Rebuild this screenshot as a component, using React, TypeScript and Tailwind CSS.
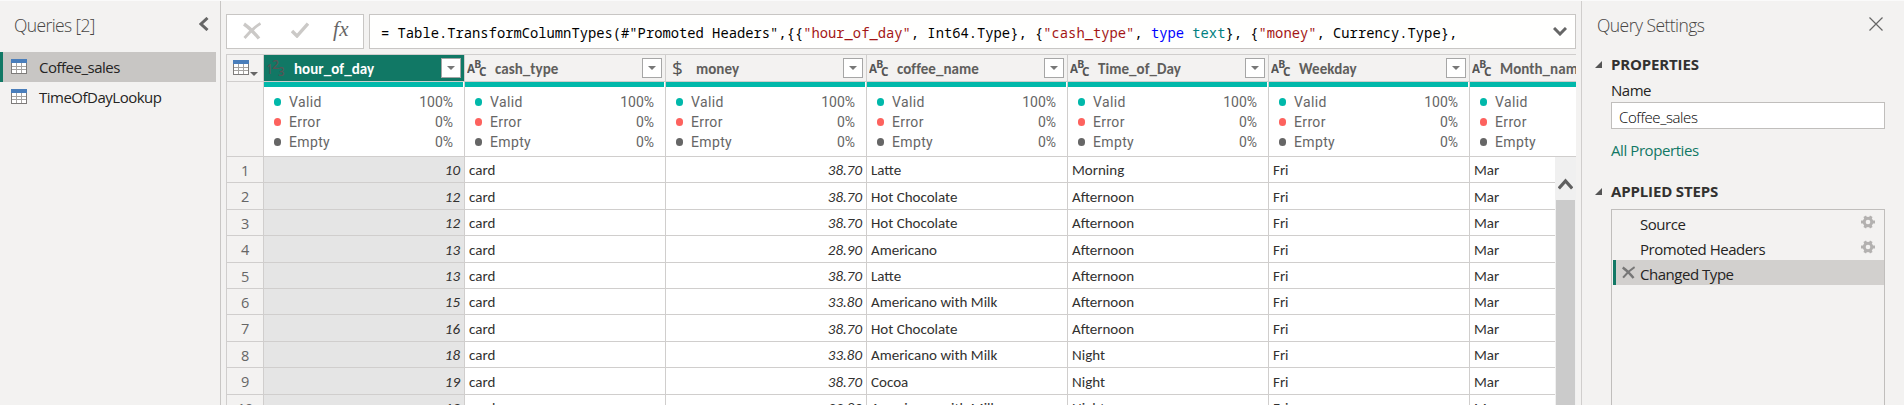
import type { ReactNode } from "react";

const UI = "font-['Open_Sans','Noto_Sans',sans-serif]";
const GRID = "font-['Carlito','Open_Sans',sans-serif]";

type Kind = "int" | "text" | "money";

const columns: { name: string; kind: Kind; selected?: boolean }[] = [
  { name: "hour_of_day", kind: "int", selected: true },
  { name: "cash_type", kind: "text" },
  { name: "money", kind: "money" },
  { name: "coffee_name", kind: "text" },
  { name: "Time_of_Day", kind: "text" },
  { name: "Weekday", kind: "text" },
  { name: "Month_name", kind: "text" },
];

const rows: string[][] = [
  ["10", "card", "38.70", "Latte", "Morning", "Fri", "Mar"],
  ["12", "card", "38.70", "Hot Chocolate", "Afternoon", "Fri", "Mar"],
  ["12", "card", "38.70", "Hot Chocolate", "Afternoon", "Fri", "Mar"],
  ["13", "card", "28.90", "Americano", "Afternoon", "Fri", "Mar"],
  ["13", "card", "38.70", "Latte", "Afternoon", "Fri", "Mar"],
  ["15", "card", "33.80", "Americano with Milk", "Afternoon", "Fri", "Mar"],
  ["16", "card", "38.70", "Hot Chocolate", "Afternoon", "Fri", "Mar"],
  ["18", "card", "33.80", "Americano with Milk", "Night", "Fri", "Mar"],
  ["19", "card", "38.70", "Cocoa", "Night", "Fri", "Mar"],
  ["19", "card", "33.80", "Americano with Milk", "Night", "Fri", "Mar"],
];

const rowHeights = [
  "h-[26px]", "h-[27px]", "h-[26px]", "h-[27px]", "h-[26px]",
  "h-[26px]", "h-[27px]", "h-[26px]", "h-[27px]", "h-[26px]",
];

const stats = [
  { label: "Valid", value: "100%", dot: "bg-[#01b8aa]" },
  { label: "Error", value: "0%", dot: "bg-[#fd625e]" },
  { label: "Empty", value: "0%", dot: "bg-[#666666]" },
];

function TableIcon() {
  return (
    <svg width="16" height="16" viewBox="0 0 16 16" shapeRendering="crispEdges" className="shrink-0">
      <rect x="0" y="0" width="16" height="15" fill="#7d7b7a" />
      <rect x="1" y="4" width="14" height="10" fill="#fff" />
      <path d="M1 7.5H15M1 10.5H15M5.5 4V14M10.5 4V14" stroke="#a5a3a1" />
      <rect x="0" y="0" width="16" height="4" fill="#4a7ebb" />
    </svg>
  );
}

function Gear() {
  return (
    <svg width="14" height="14" viewBox="0 0 14 14" className="-mt-px shrink-0">
      <path d="M0 7H14M3.7 1.2L10.3 12.8M10.3 1.2L3.7 12.8" stroke="#b3b1b0" strokeWidth="3" />
      <circle cx="7" cy="7" r="5.2" fill="#b3b1b0" />
      <circle cx="7" cy="7" r="2.3" fill="#f3f2f1" />
    </svg>
  );
}

function Cross({ size, color, wide }: { size: number; color: string; wide: number }) {
  return (
    <svg width={size} height={size} viewBox="0 0 18 17" className="shrink-0">
      <path d="M1 1.5C6 5 11 10 16 16" fill="none" stroke={color} strokeWidth={wide} />
      <path d="M17.5 1C11 5 6 10 1.5 15.5" fill="none" stroke={color} strokeWidth={wide - 0.6} />
    </svg>
  );
}

function TypeIcon({ kind }: { kind: Kind }) {
  if (kind === "money") {
    return (
      <span className="flex w-[30px] shrink-0 items-center pl-[6px] font-['Open_Sans',sans-serif] text-[19px] font-medium leading-none text-[#555]">
        $
      </span>
    );
  }
  if (kind === "int") {
    return (
      <span className="flex w-[30px] shrink-0 pl-[2px]">
        <svg width="20" height="18" viewBox="0 0 20 18" fill="#555" fontFamily="Open Sans, sans-serif" fontWeight="600">
          <text x="0.5" y="15" fontSize="13.5" textLength="6" lengthAdjust="spacingAndGlyphs">1</text>
          <text x="6" y="9.5" fontSize="12" textLength="7" lengthAdjust="spacingAndGlyphs">2</text>
          <text x="12" y="17" fontSize="13" textLength="6.5" lengthAdjust="spacingAndGlyphs">3</text>
        </svg>
      </span>
    );
  }
  return (
    <span className="flex w-[30px] shrink-0 pl-[2px]">
      <svg width="20" height="18" viewBox="0 0 20 18" fill="#555" fontFamily="Open Sans, sans-serif" fontWeight="700">
        <text x="0" y="13.7" fontSize="11.5" textLength="8" lengthAdjust="spacingAndGlyphs">A</text>
        <text x="7.2" y="9" fontSize="11" textLength="7" lengthAdjust="spacingAndGlyphs">B</text>
        <text x="12" y="17.2" fontSize="11.5" textLength="7.5" lengthAdjust="spacingAndGlyphs">C</text>
      </svg>
    </span>
  );
}

function QueryItem({ name, selected }: { name: string; selected?: boolean }) {
  return (
    <div className={`mr-[4px] flex h-[30px] items-center border-l-[3px] pl-[8px] ${selected ? "border-[#117865] bg-[#c8c6c4]" : "border-transparent"}`}>
      <TableIcon />
      <span className={`ml-[12px] text-[15px] tracking-[-0.5px] text-[#252423] ${selected ? "pt-px" : ""}`}>{name}</span>
    </div>
  );
}

function ColumnHead({ name, kind, selected }: { name: string; kind: Kind; selected?: boolean }) {
  return (
    <div className="w-[201px] shrink-0 border-r border-[#d0cecd]">
      <div className={`flex h-[26px] items-center pr-[3px] ${selected ? "bg-[#117865] text-white" : "text-[#605e5c]"}`}>
        <TypeIcon kind={kind} />
        <span className={`${GRID} grow pt-px text-[15px] font-bold leading-[20px] tracking-[0.05px]`}>{name}</span>
        <span className="flex h-[20px] w-[20px] shrink-0 items-center justify-center border border-[#a6a6a6] bg-white">
          <svg width="8" height="4" viewBox="0 0 8 4"><path d="M0 0H8L4 4Z" fill="#777" /></svg>
        </span>
      </div>
      <div className="h-px bg-[#d0cecd]" />
      <div className="bg-white">
        <div className="mr-px h-[5px] bg-[#01b8aa]" />
        <div className="flex h-[69px] flex-col pt-[5px] pl-[10px] pr-[11px]">
          {stats.map((s) => (
            <div key={s.label} className="flex h-[20px] items-center font-['Roboto',sans-serif] text-[14px] text-[#666]">
              <span className={`mr-[8px] h-[8px] w-[7px] rounded-full ${s.dot}`} />
              <span className="grow tracking-[0.35px]">{s.label}</span>
              <span>{s.value}</span>
            </div>
          ))}
        </div>
      </div>
    </div>
  );
}

function SectionTitle({ children }: { children: ReactNode }) {
  return (
    <div className="flex h-[22px] shrink-0 items-center">
      <svg width="7" height="7" viewBox="0 0 7 7" className="mr-[9px]"><path d="M7 0V7H0Z" fill="#555" /></svg>
      <span className="text-[15px] font-bold leading-[20px] tracking-[-0.15px] text-[#323130]">{children}</span>
    </div>
  );
}

function Step({ name, gear, selected }: { name: string; gear?: boolean; selected?: boolean }) {
  return (
    <div className={`flex h-[25px] items-center border-l-[3px] pr-[9px] ${selected ? "border-[#117865] bg-[#d2d0ce]" : "border-transparent"}`}>
      <span className="flex w-[24px] pl-[6px]">{selected && <Cross size={13} color="#777" wide={3.4} />}</span>
      <span className="grow pt-[2px] text-[15px] leading-[20px] tracking-[-0.47px] text-[#252423]">{name}</span>
      {gear && <Gear />}
    </div>
  );
}

export default function App() {
  return (
    <div className={`${UI} flex h-[405px] w-[1904px] overflow-hidden border-t border-[#fafafa] bg-[#f3f2f1]`}>
      <aside className="flex w-[221px] shrink-0 flex-col border-r border-[#c8c6c4]">
        <div className="flex h-[51px] items-start justify-between pt-[11px] pl-[14px] pr-[11px]">
          <span className="text-[17.5px] font-light leading-[26px] tracking-[-0.62px] text-[#484644]">Queries [2]</span>
          <svg width="10" height="14" viewBox="0 0 10 14" className="mt-[5px]"><path d="M8.5 1L2 7L8.5 13" fill="none" stroke="#666" strokeWidth="3" /></svg>
        </div>
        <QueryItem name="Coffee_sales" selected />
        <QueryItem name="TimeOfDayLookup" />
      </aside>

      <main className="flex w-[1360px] shrink-0 flex-col pt-[13px] pl-[5px] pr-[5px]">
        <div className="flex h-[35px] shrink-0 gap-[5px]">
          <div className="flex w-[138px] shrink-0 items-start border border-[#c8c6c4] bg-white pt-[7px] pl-[16px]">
            <Cross size={18} color="#cbc9c7" wide={3.4} />
            <svg width="18" height="16" viewBox="0 0 18 16" className="ml-[30px]"><path d="M1 9L6 14L17 1.5" fill="none" stroke="#cbc9c7" strokeWidth="3.4" /></svg>
            <span className="ml-[24px] -mt-[5px] font-['Liberation_Serif',serif] text-[21px] italic leading-[24px] tracking-[0.5px] text-[#666]">fx</span>
          </div>
          <div className="flex w-[1207px] items-center justify-between border border-[#c8c6c4] bg-[#fffffe] pl-[11px] pr-[8px]">
            <code className="whitespace-pre pt-[3px] font-['Noto_Sans_Mono','DejaVu_Sans_Mono',monospace] text-[13.8px] text-black">
              {'= Table.TransformColumnTypes(#"Promoted Headers",{{'}
              <span className="text-[#a31515]">"hour_of_day"</span>
              {", Int64.Type}, {"}
              <span className="text-[#a31515]">"cash_type"</span>
              {", "}
              <span className="text-[#0000ff]">type</span> <span className="text-[#008080]">text</span>
              {"}, {"}
              <span className="text-[#a31515]">"money"</span>
              {", Currency.Type},"}
            </code>
            <svg width="14" height="9" viewBox="0 0 14 9"><path d="M1 1L7 7L13 1" fill="none" stroke="#666" strokeWidth="3" /></svg>
          </div>
        </div>

        <div className="mt-[5px] flex grow flex-col overflow-hidden border-t border-l border-[#d0cecd]">
          <div className="flex shrink-0 overflow-hidden border-b border-[#d0cecd]">
            <div className="w-[37px] shrink-0 border-r border-[#d0cecd]">
              <div className="flex h-[27px] items-start border-b border-[#d0cecd] pt-[5px] pl-[6px]">
                <TableIcon />
                <svg width="8" height="5" viewBox="0 0 8 5" className="mt-[12px] ml-px"><path d="M0 0H8L4 4Z" fill="#666" /></svg>
              </div>
            </div>
            {columns.map((c) => <ColumnHead key={c.name} {...c} />)}
          </div>

          <div className="flex h-[250px] overflow-hidden">
            <div className="w-[1328px] shrink-0 overflow-hidden bg-white">
              {rows.map((r, i) => (
                <div key={i} className={`flex w-[1444px] border-b border-[#d0cecd] ${rowHeights[i]}`}>
                  <div className="flex w-[37px] shrink-0 items-center justify-center border-r border-[#d0cecd] bg-[#f3f2f1] pt-[2px] text-[14.5px] tracking-[-0.5px] text-[#666]">{i + 1}</div>
                  {r.map((v, j) => (
                    <div
                      key={j}
                      className={`${GRID} flex w-[201px] shrink-0 items-center border-r border-[#d0cecd] px-[4px] pt-[2px] text-[15px] text-[#323130] ${columns[j].kind === "text" ? "" : "justify-end italic"} ${columns[j].selected ? "bg-[#e5e5e5]" : ""}`}
                    >
                      {v}
                    </div>
                  ))}
                </div>
              ))}
            </div>
            <div className="flex w-[21px] shrink-0 flex-col items-center bg-[#f0f0f0]">
              <svg width="15" height="12" viewBox="0 0 15 12" className="mt-[21px] mb-[10px] shrink-0"><path d="M.8 10.5L7.5 3L14.2 10.5" fill="none" stroke="#606060" strokeWidth="3.2" /></svg>
              <div className="w-[19px] grow bg-[#cbcbcb]" />
            </div>
          </div>
        </div>
      </main>

      <aside className="flex grow flex-col border-l border-[#d0cecd] pl-[13px]">
        <div className="flex h-[52px] shrink-0 items-start justify-between pt-[11px] pl-[2px] pr-[21px]">
          <span className="text-[17.5px] font-light leading-[26px] tracking-[-0.55px] text-[#484644]">Query Settings</span>
          <svg width="14" height="14" viewBox="0 0 14 14" className="mt-[5px]"><path d="M.5 .5L13.5 13.5M13.5 .5L.5 13.5" stroke="#666" strokeWidth="1.2" /></svg>
        </div>
        <SectionTitle>PROPERTIES</SectionTitle>
        <div className="mr-[19px] flex shrink-0 flex-col pl-[16px]">
          <span className="mt-[4px] mb-px text-[15px] leading-[22px] tracking-[-0.5px] text-[#252423]">Name</span>
          <div className="flex h-[27px] items-center border border-[#c0bebc] bg-white pt-[2px] pl-[7px] text-[15px] font-light leading-[20px] tracking-[-0.4px] text-black">Coffee_sales</div>
          <span className="mt-[10px] text-[15px] leading-[22px] tracking-[-0.42px] text-[#117865]">All Properties</span>
        </div>
        <div className="mt-[19px] mb-px shrink-0"><SectionTitle>APPLIED STEPS</SectionTitle></div>
        <div className="mt-[6px] mr-[19px] ml-[16px] h-[196px] shrink-0 border border-b-0 border-[#c0bebc] pl-px">
          <Step name="Source" gear />
          <Step name="Promoted Headers" gear />
          <Step name="Changed Type" selected />
        </div>
      </aside>
    </div>
  );
}
